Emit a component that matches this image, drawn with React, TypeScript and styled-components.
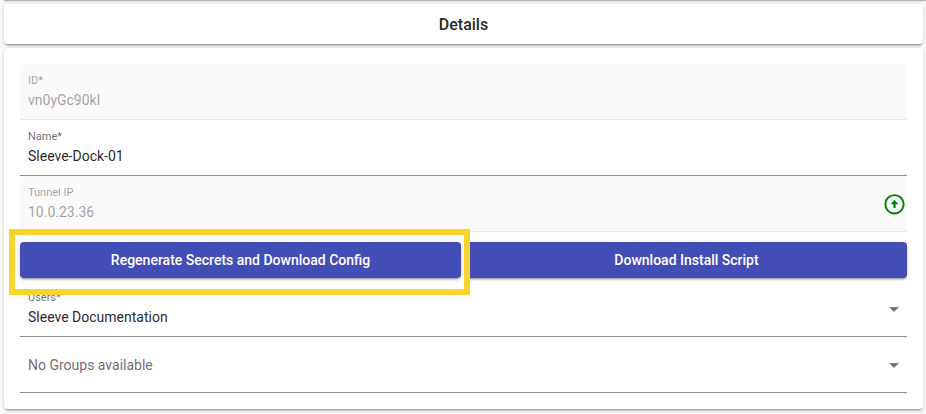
import React, { useState } from "react";
import styled, { createGlobalStyle, css } from "styled-components";

const GlobalStyle = createGlobalStyle`
  *, *::before, *::after { box-sizing: border-box; }
  body {
    margin: 0;
    background: #fafafa;
    color: rgba(0, 0, 0, 0.87);
    font-family: Roboto, "Liberation Sans", sans-serif;
    font-size: 14px;
    overflow: hidden;
  }
`;

const elevation = css`
  box-shadow: 0 3px 1px -2px rgba(0, 0, 0, 0.2), 0 2px 2px 0 rgba(0, 0, 0, 0.14),
    0 1px 5px 0 rgba(0, 0, 0, 0.12);
`;

const Page = styled.div`
  display: flex;
  flex-direction: column;
`;

const PreviousEdge = styled.div`
  height: 1px;
  margin-left: 4px;
  background: #b4b4b4;
  box-shadow: 0 1px 2px rgba(0, 0, 0, 0.14);
`;

const Stack = styled.main`
  display: flex;
  flex-direction: column;
  gap: 4px;
  padding: 3px 3px 0 4px;
`;

const Card = styled.section`
  background: #fff;
  border-radius: 4px;
  ${elevation}
`;

const HeaderCard = styled(Card)`
  padding: 9px 16px 7px;
`;

const Title = styled.h2`
  margin: 0;
  font-size: 16px;
  font-weight: 500;
  line-height: 24px;
  text-align: center;
`;

const DetailsCard = styled(Card)`
  display: flex;
  flex-direction: column;
  padding: 16px;
`;

const NextCard = styled(Card)`
  height: 16px;
`;

const Field = styled.div<{ $disabled?: boolean }>`
  display: flex;
  align-items: center;
  height: 56px;
  padding: 0 8px;
  border-radius: 4px 4px 0 0;
  border-bottom: 1px solid ${(p) => (p.$disabled ? "#e8e8e8" : "#8c8c8c")};
  background: ${(p) => (p.$disabled ? "#fafafa" : "#fff")};
  color: ${(p) => (p.$disabled ? "rgba(0, 0, 0, 0.38)" : "rgba(0, 0, 0, 0.87)")};
`;

const FieldBody = styled.div`
  display: flex;
  flex: 1;
  flex-direction: column;
  min-width: 0;
`;

const Label = styled.label<{ $disabled?: boolean }>`
  padding-top: 2px;
  color: ${(p) => (p.$disabled ? "rgba(0, 0, 0, 0.38)" : "rgba(0, 0, 0, 0.6)")};
  font-size: 11px;
  line-height: 14px;
`;

const controlText = css`
  width: 100%;
  height: 24px;
  margin: 0;
  padding: 0;
  border: 0;
  outline: 0;
  background: transparent;
  font: inherit;
  line-height: 24px;
`;

const TextInput = styled.input`
  ${controlText}
  color: inherit;
`;

const Select = styled.select<{ $placeholder?: boolean }>`
  ${controlText}
  appearance: none;
  color: ${(p) => (p.$placeholder ? "rgba(0, 0, 0, 0.6)" : "inherit")};
`;

const ArrowIcon = styled.svg`
  flex: none;
  width: 10px;
  height: 5px;
  margin-top: 2px;
  fill: #757575;
  pointer-events: none;
`;

const StatusIcon = styled.svg`
  flex: none;
  width: 24px;
  height: 24px;
  margin-right: -7px;
`;

const Actions = styled.div`
  display: grid;
  grid-template-columns: 1fr 1fr;
  gap: 5px;
  padding: 10px 0 3px;
`;

const ActionSlot = styled.div`
  position: relative;
  display: flex;
`;

const ActionButton = styled.button`
  flex: 1;
  height: 36px;
  padding: 0 16px;
  border: 0;
  border-radius: 4px;
  background: #444db5;
  color: #fff;
  font: inherit;
  font-weight: 500;
  cursor: pointer;
  ${elevation}
`;

const Highlight = styled.div`
  position: absolute;
  z-index: 1;
  inset: -13px -9px -17px -11px;
  border: 6px solid #f8d42c;
  pointer-events: none;
`;

const Arrow = () => (
  <ArrowIcon viewBox="0 0 10 5" aria-hidden="true">
    <path d="M0 0h10L5 5z" />
  </ArrowIcon>
);

export default function App() {
  const [name, setName] = useState("Sleeve-Dock-01");

  return (
    <>
      <GlobalStyle />
      <Page>
        <PreviousEdge />
        <Stack>
          <HeaderCard>
            <Title>Details</Title>
          </HeaderCard>
          <DetailsCard>
            <Field $disabled>
              <FieldBody>
                <Label htmlFor="id" $disabled>ID*</Label>
                <TextInput id="id" value="vn0yGc90kl" disabled />
              </FieldBody>
            </Field>
            <Field>
              <FieldBody>
                <Label htmlFor="name">Name*</Label>
                <TextInput id="name" value={name} onChange={(e) => setName(e.target.value)} />
              </FieldBody>
            </Field>
            <Field $disabled>
              <FieldBody>
                <Label htmlFor="tunnel-ip" $disabled>Tunnel IP</Label>
                <TextInput id="tunnel-ip" value="10.0.23.36" disabled />
              </FieldBody>
              <StatusIcon viewBox="0 0 24 24" role="img" aria-label="Tunnel up">
                <circle cx="12.5" cy="12.3" r="9.2" fill="none" stroke="#008000" strokeWidth="1.9" />
                <path d="M12.5 8l4 4.2h-2.9V16h-2.2v-3.8H8.5z" fill="#008000" />
              </StatusIcon>
            </Field>
            <Actions>
              <ActionSlot>
                <ActionButton type="button">Regenerate Secrets and Download Config</ActionButton>
                <Highlight />
              </ActionSlot>
              <ActionSlot>
                <ActionButton type="button">Download Install Script</ActionButton>
              </ActionSlot>
            </Actions>
            <Field>
              <FieldBody>
                <Label htmlFor="users">Users*</Label>
                <Select id="users" defaultValue="docs">
                  <option value="docs">Sleeve Documentation</option>
                </Select>
              </FieldBody>
              <Arrow />
            </Field>
            <Field>
              <FieldBody>
                <Select $placeholder aria-label="Groups" defaultValue="">
                  <option value="">No Groups available</option>
                </Select>
              </FieldBody>
              <Arrow />
            </Field>
          </DetailsCard>
          <NextCard />
        </Stack>
      </Page>
    </>
  );
}
